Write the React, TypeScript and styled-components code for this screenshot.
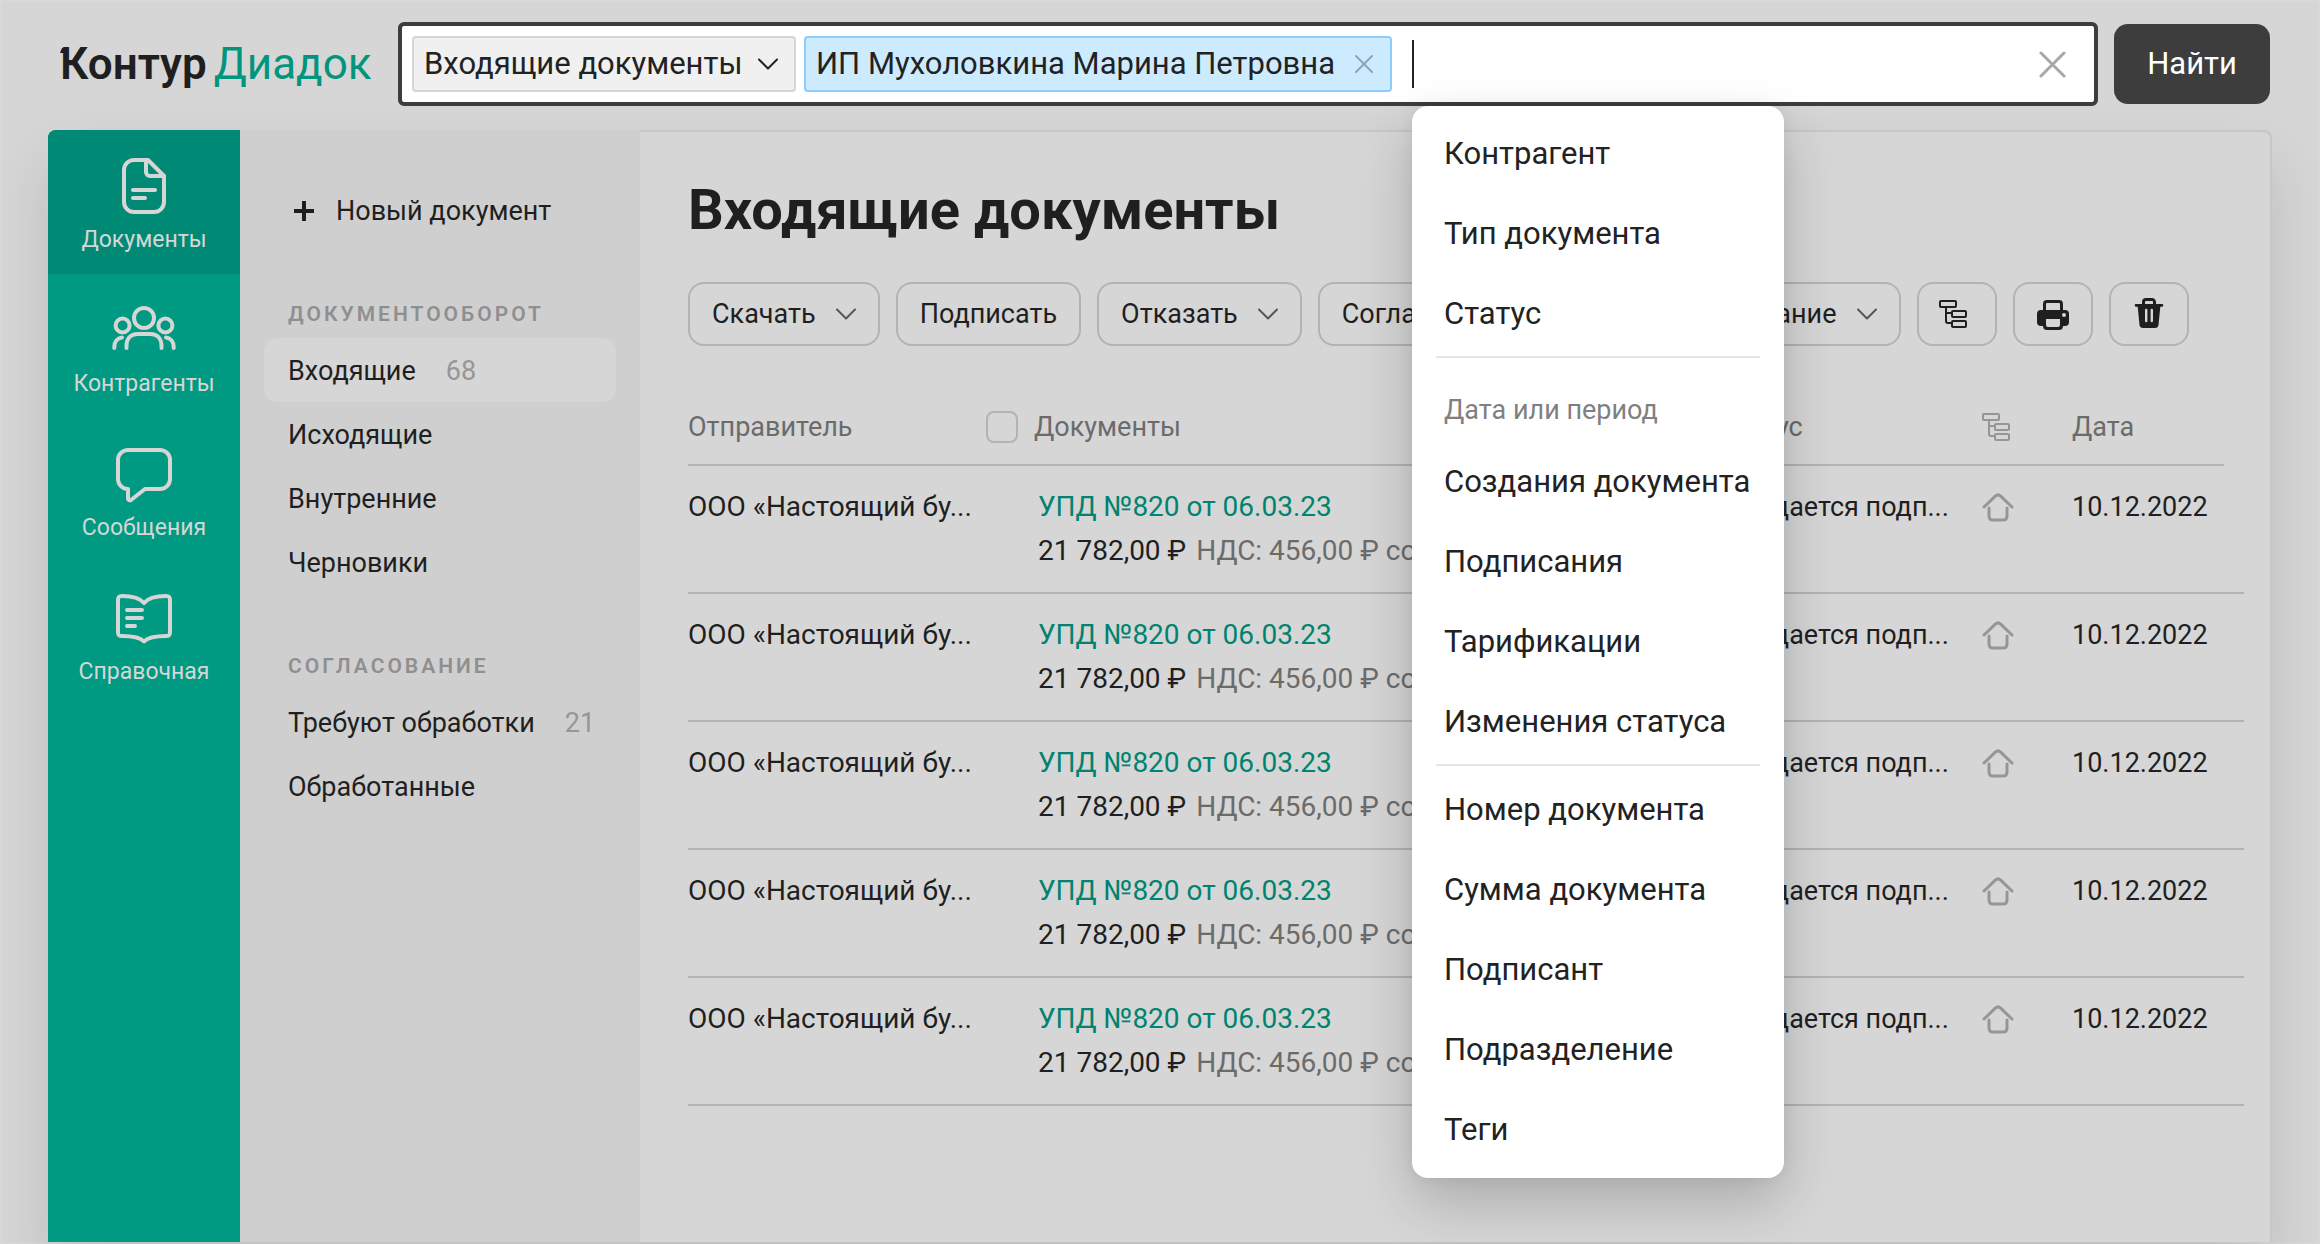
import React from "react";
import styled, { createGlobalStyle, css } from "styled-components";

const c = {
  page: "#d6d6d6",
  edge: "#d9d9d9",
  panel: "#cfcfcf",
  ink: "#1f1f1f",
  muted: "#6b6b6b",
  faint: "#8f8f8f",
  line: "#b3b3b3",
  frame: "#c6c6c6",
  green: "#009981",
  greenDark: "#008a76",
  link: "#00836f",
  dark: "#3d3d3d",
};

const GlobalStyle = createGlobalStyle`
  *, *::before, *::after { box-sizing: border-box; }
  html, body { margin: 0; padding: 0; background: ${c.page}; }
  body {
    font-family: Roboto, "Noto Sans", sans-serif;
    font-size: 27px;
    line-height: 36px;
    color: ${c.ink};
    overflow: hidden;
  }
  button, input, select { font: inherit; color: inherit; margin: 0; }
  a { color: inherit; text-decoration: none; }
`;

const Page = styled.div`
  display: flex;
  flex-direction: column;
  min-height: 100vh;
  border: 2px solid ${c.edge};
`;

/* ---------- header ---------- */

const Header = styled.header`
  position: relative;
  z-index: 2;
  display: flex;
  align-items: center;
  gap: 16px;
  padding: 20px 48px 24px 58px;
`;

const Logo = styled.a`
  position: relative;
  flex: none;
  display: flex;
  gap: 7px;
  width: 322px;
  font-size: 44px;
  line-height: 56px;
  font-weight: 600;
  white-space: nowrap;

  &::before {
    content: "";
    position: absolute;
    left: 0;
    top: 12px;
    width: 8px;
    height: 5px;
    background: ${c.ink};
    clip-path: polygon(25% 0, 100% 0, 100% 100%, 0 100%);
  }
`;

const Product = styled.span`
  font-weight: 400;
  color: #00957d;
`;

const SearchForm = styled.form`
  flex: 1;
  display: flex;
  align-items: center;
  gap: 16px;
`;

const SearchBox = styled.div`
  flex: 1;
  display: flex;
  align-items: center;
  gap: 8px;
  height: 84px;
  padding: 0 28px 0 10px;
  border: 4px solid ${c.dark};
  border-radius: 6px;
  background: #fff;
  font-size: 31px;
  line-height: 40px;
  color: #222;
`;

const chip = css`
  height: 56px;
  border: 2px solid;
  border-radius: 4px;
`;

const ScopeChip = styled.div`
  ${chip}
  position: relative;
  flex: none;
  border-color: #d6d6d6;
  background: #f0f0f0;
`;

const ScopeSelect = styled.select`
  appearance: none;
  width: 380px;
  height: 52px;
  padding: 0 44px 0 10px;
  border: 0;
  outline: 0;
  background: transparent;
`;

const ScopeArrow = styled.span`
  position: absolute;
  right: 16px;
  top: 0;
  display: flex;
  align-items: center;
  height: 52px;
  pointer-events: none;
`;

const PersonChip = styled.div`
  ${chip}
  flex: none;
  display: flex;
  align-items: center;
  justify-content: space-between;
  width: 588px;
  padding: 0 16px 0 10px;
  border-color: #8fcbfb;
  background: #cdebff;
  white-space: nowrap;
`;

const IconButton = styled.button`
  flex: none;
  display: flex;
  padding: 0;
  border: 0;
  background: none;
`;

const QueryField = styled.div`
  position: relative;
  flex: 1;
  align-self: stretch;
  display: flex;
  align-items: center;
  margin-left: 12px;
`;

const Caret = styled.span`
  width: 2px;
  height: 48px;
  background: #222;
`;

const QueryInput = styled.input`
  flex: 1;
  min-width: 0;
  height: 56px;
  padding: 0 8px;
  border: 0;
  outline: 0;
  background: transparent;
`;

const FindButton = styled.button`
  width: 156px;
  height: 80px;
  border: 0;
  border-radius: 14px;
  background: ${c.dark};
  color: #fff;
  font-size: 31px;
`;

/* ---------- suggestion menu ---------- */

const Menu = styled.div`
  position: absolute;
  left: 0;
  top: calc(100% + 4px);
  width: 372px;
  padding: 8px 0;
  border-radius: 16px;
  background: #fff;
  box-shadow: 0 24px 56px rgba(0, 0, 0, 0.2), 0 0 16px rgba(0, 0, 0, 0.06);
`;

const MenuItem = styled.button`
  display: block;
  width: 100%;
  height: 80px;
  padding: 0 32px;
  border: 0;
  background: none;
  text-align: left;
  white-space: nowrap;
`;

const MenuRule = styled.hr`
  height: 2px;
  margin: 2px 24px 4px;
  border: 0;
  background: #e5e5e5;
`;

const MenuCaption = styled.div`
  padding: 30px 32px 14px;
  font-size: 27px;
  line-height: 36px;
  color: #808080;
`;

/* ---------- shell ---------- */

const Shell = styled.div`
  flex: 1;
  display: flex;
  margin: 0 46px;
  border-radius: 8px 8px 0 0;
  box-shadow: 0 32px 64px rgba(0, 0, 0, 0.12);
`;

const Rail = styled.nav`
  flex: none;
  width: 192px;
  border-radius: 8px 0 0 0;
  overflow: hidden;
  background: ${c.green};
`;

const RailLink = styled.a<{ $active?: boolean }>`
  display: flex;
  flex-direction: column;
  align-items: center;
  gap: 8px;
  height: 144px;
  padding-top: 26px;
  font-size: 23px;
  line-height: 32px;
  color: #d6d6d6;
  background: ${(p) => (p.$active ? c.greenDark : "transparent")};
`;

const Side = styled.nav`
  flex: none;
  width: 400px;
  padding: 54px 24px 0;
  background: ${c.panel};
`;

const NewDocument = styled.button`
  display: flex;
  align-items: center;
  gap: 22px;
  height: 54px;
  margin-bottom: 4px;
  padding: 0 30px;
  border: 0;
  background: none;
`;

const SideTitle = styled.h2`
  margin: 0;
  padding: 60px 24px 12px;
  font-size: 21px;
  line-height: 24px;
  font-weight: 600;
  letter-spacing: 3px;
  text-transform: uppercase;
  color: ${c.faint};
`;

const SideLink = styled.a<{ $active?: boolean }>`
  display: flex;
  align-items: center;
  gap: 30px;
  height: 64px;
  padding: 2px 24px 0;
  border-radius: 14px;
  white-space: nowrap;
  background: ${(p) => (p.$active ? c.page : "transparent")};
`;

const Count = styled.span`
  color: #969696;
`;

const Main = styled.main`
  flex: 1;
  min-width: 0;
  padding: 46px 26px 0 48px;
  border: solid ${c.frame};
  border-width: 2px 2px 0 0;
  border-radius: 0 8px 0 0;
  background: ${c.page};
`;

const Title = styled.h1`
  margin: 0;
  font-size: 56px;
  line-height: 64px;
  font-weight: 700;
`;

const Toolbar = styled.div`
  display: flex;
  gap: 16px;
  margin-top: 40px;
`;

const ToolButton = styled.button<{ $wide?: boolean }>`
  display: flex;
  align-items: center;
  justify-content: center;
  gap: 20px;
  height: 64px;
  min-width: 80px;
  padding: 0 ${(p) => (p.$wide ? "22px" : "0")};
  border: 2px solid ${c.line};
  border-radius: 16px;
  background: none;
`;

/* ---------- table ---------- */

const Table = styled.table`
  width: 100%;
  margin-top: 42px;
  border-collapse: separate;
  border-spacing: 0;
  table-layout: fixed;
`;

const Th = styled.th<{ $blank?: boolean }>`
  height: 78px;
  padding: 2px 0 0;
  border-bottom: ${(p) => (p.$blank ? "0" : `2px solid ${c.line}`)};
  text-align: left;
  font-weight: 400;
  color: ${c.muted};
`;

const Td = styled.td<{ $indent?: boolean; $large?: boolean }>`
  height: 128px;
  padding: 19px 0 0 ${(p) => (p.$indent ? "52px" : "0")};
  border-bottom: 2px solid ${c.line};
  vertical-align: top;
  font-size: ${(p) => (p.$large ? "28px" : "27px")};
  line-height: 44px;
  white-space: nowrap;
  overflow: hidden;
`;

const HeadLabel = styled.label`
  display: flex;
  align-items: center;
  gap: 16px;
`;

const CheckBox = styled.input`
  appearance: none;
  width: 32px;
  height: 32px;
  border: 2px solid ${c.line};
  border-radius: 8px;
`;

const DocLink = styled.a`
  display: block;
  color: ${c.link};
`;

const Vat = styled.span`
  margin-left: 10px;
  color: ${c.muted};
`;

const CellIcon = styled.span`
  display: flex;
  align-items: center;
  height: 44px;
  color: #969696;
`;

/* ---------- icons ---------- */

const Chevron = ({ stroke }: { stroke: string }) => (
  <svg width="20" height="12" viewBox="0 0 20 12" fill="none" stroke={stroke} strokeWidth="2" strokeLinecap="round" strokeLinejoin="round">
    <path d="M1 1.5l9 9 9-9" />
  </svg>
);

const Cross = ({ size, stroke }: { size: number; stroke: string }) => (
  <svg width={size} height={size} viewBox={`0 0 ${size} ${size}`} fill="none" stroke={stroke} strokeWidth={size > 20 ? 3 : 2} strokeLinecap="round">
    <path d={`M2 2L${size - 2} ${size - 2}M${size - 2} 2L2 ${size - 2}`} />
  </svg>
);

const RailIcon = ({ children }: { children: React.ReactNode }) => (
  <svg width="64" height="60" viewBox="0 0 64 60" fill="none" stroke="currentColor" strokeWidth="4" strokeLinecap="round" strokeLinejoin="round">
    {children}
  </svg>
);

const TreeIcon = () => (
  <svg width="36" height="28" viewBox="0 0 36 28" fill="none" stroke="currentColor" strokeWidth="2" strokeLinejoin="round">
    <rect x="1" y="1" width="16" height="6" rx="1" />
    <rect x="13" y="11" width="14" height="6" rx="1" />
    <rect x="13" y="21" width="14" height="6" rx="1" />
    <path d="M7 7v14a2 2 0 0 0 2 2h4M7 13h6" />
  </svg>
);

const PrinterIcon = () => (
  <svg width="32" height="32" viewBox="0 0 32 32">
    <path d="M7.5 14V6a2.5 2.5 0 0 1 2.5-2.500h12A2.500 2.500 0 0 1 24.500 6v8" fill="none" stroke="currentColor" strokeWidth="3" />
    <path
      fill="currentColor"
      fillRule="evenodd"
      d="M4 12h24a4 4 0 0 1 4 4v8a4 4 0 0 1-4 4h-2a4 4 0 0 1-4 4H10a4 4 0 0 1-4-4H4a4 4 0 0 1-4-4v-8a4 4 0 0 1 4-4zM9 21v6a2 2 0 0 0 2 2h10a2 2 0 0 0 2-2v-6zM27 15a2 2 0 1 0 0 4 2 2 0 0 0 0-4z"
    />
  </svg>
);

const TrashIcon = () => (
  <svg width="32" height="32" viewBox="0 0 32 32">
    <path d="M10.500 8V4A2.500 2.500 0 0 1 13 1.500h6A2.500 2.500 0 0 1 21.500 4v4" fill="none" stroke="currentColor" strokeWidth="3" />
    <path
      fill="currentColor"
      fillRule="evenodd"
      d="M3 6h26a1.300 1.300 0 0 1 0 2.700h-1.700L25.500 27a3.500 3.500 0 0 1-3.500 3H10a3.500 3.500 0 0 1-3.500-3L4.700 8.700H3A1.300 1.300 0 0 1 3 6zM12 12v11a1.200 1.200 0 0 0 2.400 0V12a1.200 1.200 0 0 0-2.400 0zM17.600 12v11a1.200 1.200 0 0 0 2.400 0V12a1.200 1.200 0 0 0-2.400 0z"
    />
  </svg>
);

const HouseIcon = () => (
  <svg width="32" height="30" viewBox="0 0 32 30" fill="none" stroke="currentColor" strokeWidth="3" strokeLinecap="round" strokeLinejoin="round">
    <path d="M2 15L13.300 4.200Q16 1.500 18.700 4.200L30 15" />
    <path d="M7 16v8c0 2.500 1.300 4 4 4h10c2.700 0 4-1.500 4-4v-8" />
  </svg>
);

const PlusIcon = () => (
  <svg width="20" height="20" viewBox="0 0 20 20" stroke="currentColor" strokeWidth="4">
    <path d="M10 0v20M0 10h20" />
  </svg>
);

const rail = [
  {
    label: "Документы",
    icon: (
      <>
        <path d="M36 4H22a10 10 0 0 0-10 10v32a10 10 0 0 0 10 10h20a10 10 0 0 0 10-10V20z" />
        <path d="M34 4v12a4 4 0 0 0 4 4h14M21 34h22M21 42h12" />
      </>
    ),
  },
  {
    label: "Контрагенты",
    icon: (
      <>
        <circle cx="32" cy="18" r="10" />
        <circle cx="10.600" cy="25.500" r="7" />
        <circle cx="53.400" cy="25.500" r="7" />
        <path d="M14.500 48v-2c0-7 4-12 11-12h13c7 0 11 5 11 12v2" />
        <path d="M2.300 48v-1c0-5 3-9 7.700-9.500M61.700 48v-1c0-5-3-9-7.700-9.500" />
      </>
    ),
  },
  {
    label: "Сообщения",
    icon: <path d="M16 6h32a10 10 0 0 1 10 10v19a10 10 0 0 1-10 10H33L19 56c-1 .8-3 .3-3-1.500V45a10 10 0 0 1-10-10V16A10 10 0 0 1 16 6z" />,
  },
  {
    label: "Справочная",
    icon: (
      <>
        <path d="M32 15C28 10 20 8 10 8c-3 0-4 1-4 4v32c0 3 1 4 4 4 10 0 18 1 22 5.500C36 49 44 48 54 48c3 0 4-1 4-4V12c0-3-1-4-4-4-10 0-18 2-22 7z" />
        <path d="M15 22h15M15 30h15M15 38h8" />
      </>
    ),
  },
];

const rows = Array.from({ length: 5 }, (_, id) => ({
  id,
  sender: "ООО «Настоящий бу...",
  title: "УПД №820 от 06.03.23",
  sum: "21 782,00 ₽",
  vat: "НДС: 456,00 ₽ согласован",
  status: "Ожидается подп...",
  date: "10.12.2022",
}));

export default function App() {
  return (
    <>
      <GlobalStyle />
      <Page>
        <Header>
          <Logo href="#">
            Контур<Product>Диадок</Product>
          </Logo>
          <SearchForm onSubmit={(e) => e.preventDefault()}>
            <SearchBox>
              <ScopeChip>
                <ScopeSelect aria-label="Раздел">
                  <option>Входящие документы</option>
                </ScopeSelect>
                <ScopeArrow>
                  <Chevron stroke="#222" />
                </ScopeArrow>
              </ScopeChip>
              <PersonChip>
                ИП Мухоловкина Марина Петровна
                <IconButton type="button" aria-label="Убрать">
                  <Cross size={20} stroke="#8fa5b2" />
                </IconButton>
              </PersonChip>
              <QueryField>
                <Caret />
                <QueryInput type="text" aria-label="Поиск" />
                <Menu>
                  {["Контрагент", "Тип документа", "Статус"].map((t) => (
                    <MenuItem type="button" key={t}>{t}</MenuItem>
                  ))}
                  <MenuRule />
                  <MenuCaption>Дата или период</MenuCaption>
                  {["Создания документа", "Подписания", "Тарификации", "Изменения статуса"].map((t) => (
                    <MenuItem type="button" key={t}>{t}</MenuItem>
                  ))}
                  <MenuRule />
                  {["Номер документа", "Сумма документа", "Подписант", "Подразделение", "Теги"].map((t) => (
                    <MenuItem type="button" key={t}>{t}</MenuItem>
                  ))}
                </Menu>
              </QueryField>
              <IconButton type="button" aria-label="Очистить">
                <Cross size={27} stroke="#a8a8a8" />
              </IconButton>
            </SearchBox>
            <FindButton type="submit">Найти</FindButton>
          </SearchForm>
        </Header>

        <Shell>
          <Rail>
            {rail.map((r, i) => (
              <RailLink href="#" key={r.label} $active={i === 0}>
                <RailIcon>{r.icon}</RailIcon>
                {r.label}
              </RailLink>
            ))}
          </Rail>

          <Side>
            <NewDocument type="button">
              <PlusIcon />
              Новый документ
            </NewDocument>
            <SideTitle>Документооборот</SideTitle>
            <SideLink href="#" $active>
              Входящие <Count>68</Count>
            </SideLink>
            <SideLink href="#">Исходящие</SideLink>
            <SideLink href="#">Внутренние</SideLink>
            <SideLink href="#">Черновики</SideLink>
            <SideTitle>Согласование</SideTitle>
            <SideLink href="#">
              Требуют обработки <Count>21</Count>
            </SideLink>
            <SideLink href="#">Обработанные</SideLink>
          </Side>

          <Main>
            <Title>Входящие документы</Title>
            <Toolbar>
              <ToolButton type="button" $wide>Скачать <Chevron stroke="#555" /></ToolButton>
              <ToolButton type="button" $wide>Подписать</ToolButton>
              <ToolButton type="button" $wide>Отказать <Chevron stroke="#555" /></ToolButton>
              <ToolButton type="button" $wide>Согласование <Chevron stroke="#555" /></ToolButton>
              <ToolButton type="button" $wide>Редактирование <Chevron stroke="#555" /></ToolButton>
              <ToolButton type="button" aria-label="Структура"><TreeIcon /></ToolButton>
              <ToolButton type="button" aria-label="Печать"><PrinterIcon /></ToolButton>
              <ToolButton type="button" aria-label="Удалить"><TrashIcon /></ToolButton>
            </Toolbar>

            <Table>
              <colgroup>
                <col style={{ width: 298 }} />
                <col />
                <col style={{ width: 264 }} />
                <col style={{ width: 90 }} />
                <col style={{ width: 152 }} />
                <col style={{ width: 20 }} />
              </colgroup>
              <thead>
                <tr>
                  <Th>Отправитель</Th>
                  <Th>
                    <HeadLabel>
                      <CheckBox type="checkbox" />
                      Документы
                    </HeadLabel>
                  </Th>
                  <Th>Статус</Th>
                  <Th>
                    <CellIcon><TreeIcon /></CellIcon>
                  </Th>
                  <Th>Дата</Th>
                  <Th $blank />
                </tr>
              </thead>
              <tbody>
                {rows.map((r) => (
                  <tr key={r.id}>
                    <Td $large>{r.sender}</Td>
                    <Td $large $indent>
                      <DocLink href="#">{r.title}</DocLink>
                      {r.sum}
                      <Vat>{r.vat}</Vat>
                    </Td>
                    <Td>{r.status}</Td>
                    <Td>
                      <CellIcon><HouseIcon /></CellIcon>
                    </Td>
                    <Td>{r.date}</Td>
                    <Td />
                  </tr>
                ))}
              </tbody>
            </Table>
          </Main>
        </Shell>
      </Page>
    </>
  );
}
